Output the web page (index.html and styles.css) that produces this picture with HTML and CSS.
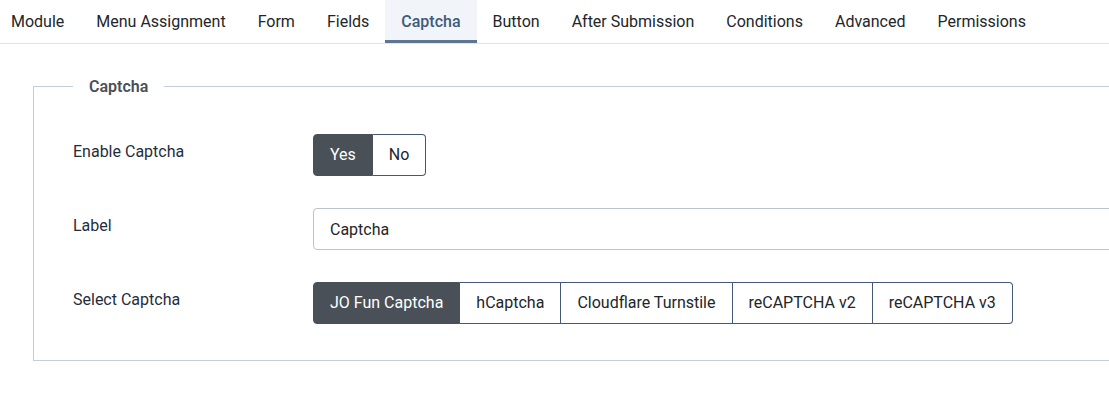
FILE: index.html
```html
<html>
<head>
  <title>Captcha settings</title>
  <link rel="stylesheet" href="styles.css">
</head>
<body>
<ul class="tabs">
  <li>Module</li>
  <li>Menu Assignment</li>
  <li>Form</li>
  <li>Fields</li>
  <li class="active">Captcha</li>
  <li>Button</li>
  <li>After Submission</li>
  <li>Conditions</li>
  <li>Advanced</li>
  <li>Permissions</li>
</ul>

<div class="panel">
  <fieldset class="options">
    <legend>Captcha</legend>

    <div class="row">
      <label>Enable Captcha</label>
      <div class="btn-group">
        <span class="btn checked">Yes</span>
        <span class="btn">No</span>
      </div>
    </div>

    <div class="row">
      <label>Label</label>
      <input class="field" type="text" value="Captcha" />
    </div>

    <div class="row">
      <label>Select Captcha</label>
      <div class="btn-group">
        <span class="btn checked">JO Fun Captcha</span>
        <span class="btn">hCaptcha</span>
        <span class="btn">Cloudflare Turnstile</span>
        <span class="btn">reCAPTCHA v2</span>
        <span class="btn">reCAPTCHA v3</span>
      </div>
    </div>
  </fieldset>
</div>
</body>
</html>
```

FILE: styles.css
```css
body {
  margin: 0;
  font-family: Roboto, "Liberation Sans", sans-serif;
  font-size: 16px;
  color: #22262a;
  background: #fff;
  overflow: hidden;
}

.tabs {
  display: flex;
  list-style: none;
  margin: 0 0 0 -5px;
  padding: 0;
  border-bottom: 1px solid #e1e5ea;
}

.tabs li {
  padding: 1px 16px 0;
  height: 43px;
  line-height: 42px;
  box-sizing: border-box;
  border-bottom: 3px solid transparent;
}

.tabs li.active {
  background: #f1f4f8;
  border-bottom-color: #5d7594;
  color: #3f5a7a;
  font-weight: 500;
}

.panel {
  padding: 33px 0 0 33px;
}

.options {
  margin: 0 -40px 0 0;
  padding: 38px 0 36px 39px;
  border: 1px solid #c4ced8;
  border-radius: 0;
}

.options legend {
  padding: 0 16px;
  font-weight: 600;
  color: #495057;
}

.row {
  display: flex;
  align-items: flex-start;
  margin-top: 32px;
}

.row:first-of-type {
  margin-top: 0;
}

.row label {
  width: 240px;
  flex: none;
  padding-top: 6px;
  line-height: 24px;
  color: #1f2d3d;
}

.btn-group {
  display: flex;
}

.btn {
  height: 42px;
  line-height: 40px;
  box-sizing: border-box;
  padding: 0 16px;
  border: 1px solid #44597a;
  border-left-width: 0;
  color: #22262a;
  background: #fff;
}

.btn:first-child {
  border-left-width: 1px;
  border-radius: 4px 0 0 4px;
}

.btn:last-child {
  border-radius: 0 4px 4px 0;
}

.btn.checked {
  background: #495057;
  border-color: #495057;
  color: #fff;
}

.field {
  flex: 1;
  height: 42px;
  padding: 0 16px;
  font: inherit;
  color: #22262a;
  border: 1px solid #b9c4cf;
  border-radius: 4px;
}
```
